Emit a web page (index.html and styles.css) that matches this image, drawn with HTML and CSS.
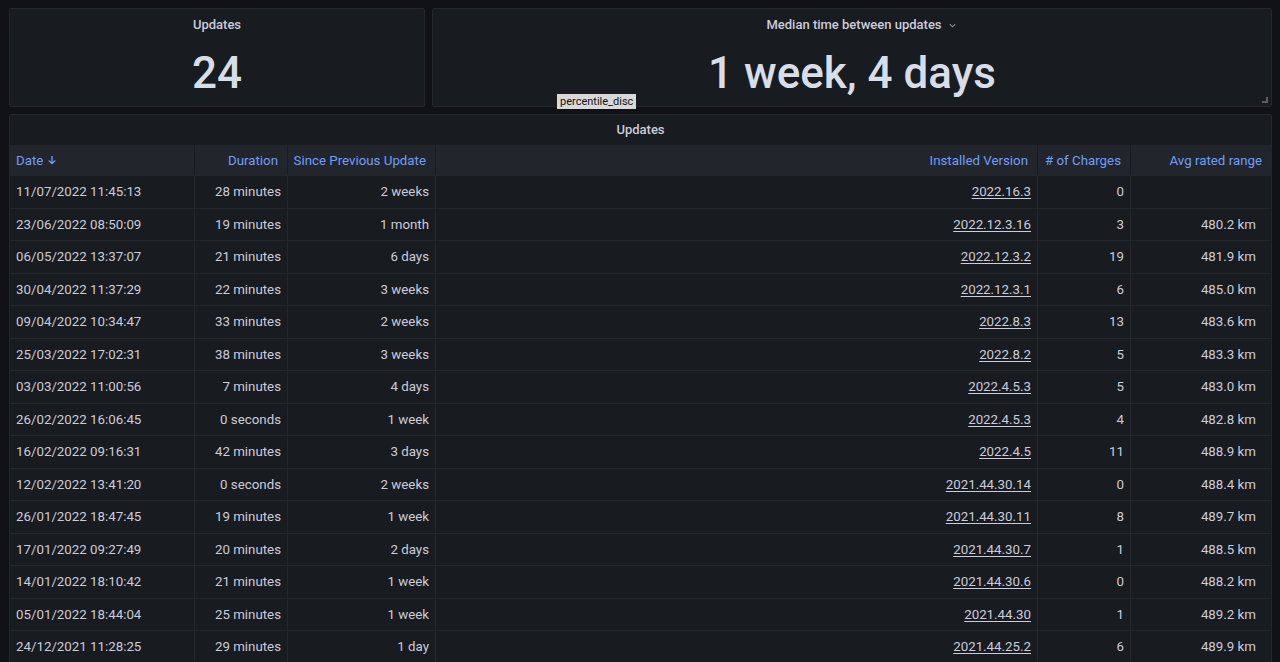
FILE: index.html
```html
<!DOCTYPE html>
<html lang="en">
<head>
    <meta charset="UTF-8">
    <title>Updates</title>
    <link rel="stylesheet" href="styles.css">
</head>
<body>
    <div class="dashboard">
        <!-- Stat panels -->
        <div class="stat-row">
            <div class="panel stat stat-count">
                <div class="panel-title">Updates</div>
                <div class="stat-value">24</div>
            </div>
            <div class="panel stat stat-median">
                <div class="panel-title"><span class="title-text">Median time between updates
                    <svg class="chevron" width="9" height="9" viewBox="0 0 10 10"><path d="M2 3.5 L5 6.5 L8 3.5" fill="none" stroke="#8e8e9a" stroke-width="1.2"/></svg></span>
                </div>
                <div class="stat-value">1 week, 4 days</div>
                <span class="resize-handle"></span>
            </div>
        </div>

        <span class="tooltip">percentile_disc</span>

        <!-- Updates table -->
        <div class="panel table-panel">
            <div class="panel-title table-title">Updates</div>
            <div class="grid-row head">
                <div class="cell left">Date
                    <svg class="sort" width="10" height="10" viewBox="0 0 10 10"><path d="M5 1 V8.5 M1.8 5.5 L5 8.6 L8.2 5.5" fill="none" stroke="#6e9fff" stroke-width="1.3"/></svg>
                </div>
                <div class="cell">Duration</div>
                <div class="cell">Since Previous Update</div>
                <div class="cell">Installed Version</div>
                <div class="cell">&#35; of Charges</div>
                <div class="cell">Avg rated range</div>
            </div>
            <div id="rows"></div>
        </div>
    </div>

    <script>
        // update history
        const updates = [
            ['11/07/2022 11:45:13', '28 minutes', '2 weeks', '2022.16.3', '0', ''],
            ['23/06/2022 08:50:09', '19 minutes', '1 month', '2022.12.3.16', '3', '480.2 km'],
            ['06/05/2022 13:37:07', '21 minutes', '6 days', '2022.12.3.2', '19', '481.9 km'],
            ['30/04/2022 11:37:29', '22 minutes', '3 weeks', '2022.12.3.1', '6', '485.0 km'],
            ['09/04/2022 10:34:47', '33 minutes', '2 weeks', '2022.8.3', '13', '483.6 km'],
            ['25/03/2022 17:02:31', '38 minutes', '3 weeks', '2022.8.2', '5', '483.3 km'],
            ['03/03/2022 11:00:56', '7 minutes', '4 days', '2022.4.5.3', '5', '483.0 km'],
            ['26/02/2022 16:06:45', '0 seconds', '1 week', '2022.4.5.3', '4', '482.8 km'],
            ['16/02/2022 09:16:31', '42 minutes', '3 days', '2022.4.5', '11', '488.9 km'],
            ['12/02/2022 13:41:20', '0 seconds', '2 weeks', '2021.44.30.14', '0', '488.4 km'],
            ['26/01/2022 18:47:45', '19 minutes', '1 week', '2021.44.30.11', '8', '489.7 km'],
            ['17/01/2022 09:27:49', '20 minutes', '2 days', '2021.44.30.7', '1', '488.5 km'],
            ['14/01/2022 18:10:42', '21 minutes', '1 week', '2021.44.30.6', '0', '488.2 km'],
            ['05/01/2022 18:44:04', '25 minutes', '1 week', '2021.44.30', '1', '489.2 km'],
            ['24/12/2021 11:28:25', '29 minutes', '1 day', '2021.44.25.2', '6', '489.9 km']
        ];

        const rows = document.getElementById('rows');
        updates.forEach(u => {
            const row = document.createElement('div');
            row.className = 'grid-row';
            row.innerHTML =
                `<div class="cell left">${u[0]}</div>` +
                `<div class="cell">${u[1]}</div>` +
                `<div class="cell">${u[2]}</div>` +
                `<div class="cell"><a href="#">${u[3]}</a></div>` +
                `<div class="cell">${u[4]}</div>` +
                `<div class="cell last">${u[5]}</div>`;
            rows.appendChild(row);
        });
    </script>
</body>
</html>
```

FILE: styles.css
```css
/* Page */
body {
    margin: 0;
    background: #111217;
    color: #ccccdc;
    font-family: Roboto, "Liberation Sans", sans-serif;
    font-size: 13.3px;
    overflow: hidden;
}

.dashboard {
    position: relative;
    padding: 8px 8px 0 9px;
}

/* Panels */
.panel {
    background: #181b1f;
    border: 1px solid #24262b;
    border-radius: 2px;
    box-sizing: border-box;
}

.panel-title {
    font-weight: 500;
    font-size: 13px;
    text-align: center;
    color: #ccccdc;
}

/* Stat panels */
.stat-row {
    display: flex;
    gap: 7px;
    height: 99px;
}

.stat {
    position: relative;
    padding-top: 8px;
}

.stat-count {
    width: 416px;
}

.stat-median {
    flex: 1;
}

.stat-value {
    font-size: 44px;
    font-weight: 500;
    text-align: center;
    color: #d8dee9;
    line-height: 54px;
    margin-top: 14px;
}

.title-text {
    position: relative;
    margin-left: 4px;
}

.chevron {
    position: absolute;
    right: -15px;
    top: 4px;
}

.resize-handle {
    position: absolute;
    right: 3px;
    bottom: 3px;
    width: 4px;
    height: 4px;
    border-right: 2px solid #5a5d63;
    border-bottom: 2px solid #5a5d63;
}

/* Tooltip */
.tooltip {
    position: absolute;
    left: 557px;
    top: 94px;
    background: #d9d9d9;
    color: #111;
    font-size: 11px;
    line-height: 15px;
    padding: 0 3px;
    z-index: 2;
}

/* Table */
.table-panel {
    margin-top: 7px;
    width: 1263px;
}

.table-title {
    height: 30px;
    line-height: 30px;
}

.grid-row {
    display: grid;
    grid-template-columns: 185px 93px 148px 602px 93px 140px;
    height: 32.5px;
    border-top: 1px solid #24262b;
    box-sizing: border-box;
}

.grid-row.head {
    height: 30px;
    background: #22252b;
    border-top: none;
    color: #6e9fff;
}

.cell {
    display: flex;
    align-items: center;
    justify-content: flex-end;
    padding: 0 6px;
    border-right: 1px solid #24262b;
    white-space: nowrap;
    overflow: hidden;
}

.cell:last-child {
    border-right: none;
}

.head .cell {
    padding: 0 9px 0 6px;
    border-right-color: #1a1c21;
}

.cell.left {
    justify-content: flex-start;
}

.cell.last {
    padding-right: 15px;
}

.sort {
    margin-left: 4px;
}

.cell a {
    color: #ccccdc;
    text-decoration: underline;
    text-underline-offset: 2px;
}
```
